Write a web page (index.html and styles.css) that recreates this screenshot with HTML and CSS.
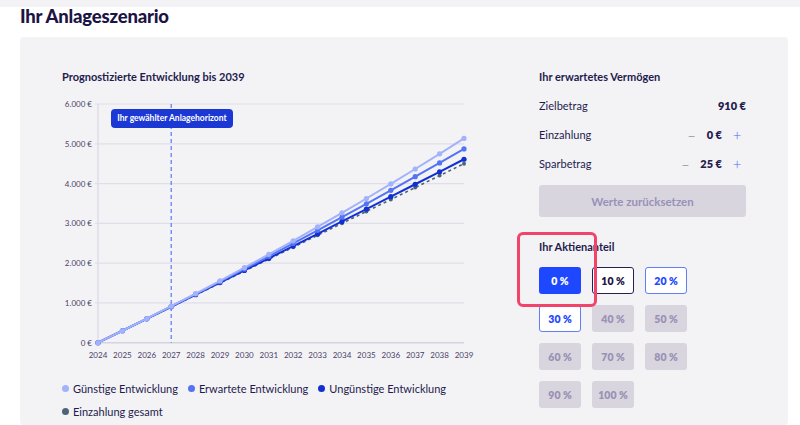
FILE: index.html
```html
<!DOCTYPE html>
<html lang="de">
<head>
  <meta charset="UTF-8" />
  <title>Ihr Anlageszenario</title>
  <link rel="stylesheet" href="styles.css">
</head>
<body>
  <div class="top-strip"></div>
  <h1 class="page-title">Ihr Anlageszenario</h1>

  <div class="panel">
    <!-- Chart column -->
    <section class="chart-col">
      <h2 class="section-title">Prognostizierte Entwicklung bis 2039</h2>
      <div class="chart-wrap">
        <svg id="chart" class="chart" width="420" height="270" viewBox="0 0 420 270"></svg>
        <div class="horizon-badge">Ihr gewählter Anlagehorizont</div>
      </div>
      <ul class="legend">
        <li><span class="dot dot-good"></span>Günstige Entwicklung</li>
        <li><span class="dot dot-expected"></span>Erwartete Entwicklung</li>
        <li><span class="dot dot-bad"></span>Ungünstige Entwicklung</li>
        <li><span class="dot dot-paid"></span>Einzahlung gesamt</li>
      </ul>
    </section>

    <!-- Settings column -->
    <section class="side-col">
      <h2 class="section-title">Ihr erwartetes Vermögen</h2>
      <div class="values">
        <div class="value-row">
          <span>Zielbetrag</span>
          <strong>910 €</strong>
        </div>
        <div class="value-row">
          <span>Einzahlung</span>
          <div class="stepper">
            <span class="minus">–</span>
            <strong>0 €</strong>
            <span class="plus">+</span>
          </div>
        </div>
        <div class="value-row">
          <span>Sparbetrag</span>
          <div class="stepper">
            <span class="minus">–</span>
            <strong>25 €</strong>
            <span class="plus">+</span>
          </div>
        </div>
      </div>
      <button class="reset-btn" disabled>Werte zurücksetzen</button>

      <div class="share">
        <h2 class="section-title">Ihr Aktienanteil</h2>
        <div class="share-grid">
          <button class="pct pct-active">0 %</button>
          <button class="pct pct-dark">10 %</button>
          <button class="pct pct-outline">20 %</button>
          <button class="pct pct-outline">30 %</button>
          <button class="pct" disabled>40 %</button>
          <button class="pct" disabled>50 %</button>
          <button class="pct" disabled>60 %</button>
          <button class="pct" disabled>70 %</button>
          <button class="pct" disabled>80 %</button>
          <button class="pct" disabled>90 %</button>
          <button class="pct" disabled>100 %</button>
        </div>
        <div class="highlight"></div>
      </div>
    </section>
  </div>

  <script>
    const svg = document.getElementById('chart');
    const NS = 'http://www.w3.org/2000/svg';
    const x0 = 36, dx = 24.4, y0 = 247.7, perK = 39.78;

    function el(tag, attrs, text) {
      const node = document.createElementNS(NS, tag);
      for (const k in attrs) node.setAttribute(k, attrs[k]);
      if (text) node.textContent = text;
      svg.appendChild(node);
      return node;
    }
    const xAt = k => x0 + k * dx;
    const yAt = v => y0 - v / 1000 * perK;

    // grid + y labels
    for (let i = 0; i <= 6; i++) {
      const y = yAt(i * 1000);
      el('line', { x1: 33, x2: 402, y1: y, y2: y, stroke: i === 0 ? '#d6d3df' : '#e0dee8', 'stroke-width': i === 0 ? 1.6 : 1.2 });
      el('text', { x: 30, y: y + 3, 'text-anchor': 'end', class: 'axis-label' }, i === 0 ? '0 €' : i + '.000 €');
    }
    el('line', { x1: x0, x2: x0, y1: yAt(6000), y2: y0, stroke: '#e0dee8', 'stroke-width': 1.6 });

    // x labels
    for (let k = 0; k <= 15; k++) {
      el('text', { x: xAt(k), y: 263, 'text-anchor': 'middle', class: 'axis-label' }, String(2024 + k));
    }

    // chosen horizon
    el('line', { x1: xAt(3), x2: xAt(3), y1: yAt(6000), y2: y0, stroke: '#5b78f2', 'stroke-width': 1.2, 'stroke-dasharray': '4 3' });

    const series = [
      { rate: 0, color: '#4e6476', dashed: true },
      { rate: 0.0035, color: '#1030d2' },
      { rate: 0.0112, color: '#5573f5' },
      { rate: 0.0186, color: '#a2b2fb' }
    ];

    for (const s of series) {
      let v = 0;
      const pts = [];
      for (let k = 0; k <= 15; k++) {
        if (k > 0) v = v * (1 + s.rate) + 300;
        pts.push([xAt(k), yAt(v)]);
      }
      el('polyline', {
        points: pts.map(p => p.join(',')).join(' '),
        fill: 'none', stroke: s.color,
        'stroke-width': s.dashed ? 1.6 : 2,
        'stroke-dasharray': s.dashed ? '3 3' : 'none'
      });
      for (const p of pts) {
        el('circle', { cx: p[0], cy: p[1], r: s.dashed ? 2 : 2.6, fill: s.color });
      }
    }
  </script>
</body>
</html>
```

FILE: styles.css
```css
html, body {
  margin: 0;
  padding: 0;
  overflow: hidden;
  background: #ffffff;
  font-family: 'Lato', 'Noto Sans', sans-serif;
  color: #1e1647;
}

.top-strip {
  height: 7px;
  background: #f3f3f6;
}

.page-title {
  margin: 0 0 0 20px;
  font-size: 18.5px;
  line-height: 18px;
  font-weight: 900;
  letter-spacing: -0.2px;
  color: #1c1444;
}

.panel {
  margin: 12px 12px 0 20px;
  padding: 33px 42px 0 42px;
  background: #f3f3f6;
  border-radius: 4px;
  display: grid;
  grid-template-columns: 1fr 207px;
  column-gap: 40px;
  height: 355px;
}

.section-title {
  margin: 0;
  font-size: 11px;
  line-height: 14px;
  font-weight: 700;
  color: #241b4d;
}

/* chart */
.chart-wrap {
  position: relative;
  margin-top: 11px;
  width: 420px;
  height: 270px;
}

.chart {
  display: block;
}

.axis-label {
  font-size: 8px;
  fill: #4a4266;
}

.horizon-badge {
  position: absolute;
  left: 49px;
  top: 14px;
  width: 122px;
  height: 19px;
  line-height: 19px;
  border-radius: 4px;
  background: #1b37d4;
  color: #fff;
  font-size: 8.5px;
  font-weight: 700;
  text-align: center;
}

.legend {
  list-style: none;
  margin: 12px 0 0 0;
  padding: 0;
  display: flex;
  flex-wrap: wrap;
  column-gap: 10px;
  font-size: 11px;
  line-height: 23px;
  color: #241b4d;
}

.legend li {
  display: flex;
  align-items: center;
  gap: 4px;
}

.dot {
  width: 7px;
  height: 7px;
  border-radius: 50%;
}

.dot-good { background: #a2b2fb; }
.dot-expected { background: #5573f5; }
.dot-bad { background: #1030d2; }
.dot-paid { background: #4e6476; }

/* side column */
.values {
  margin-top: 7px;
}

.value-row {
  height: 29px;
  display: flex;
  align-items: center;
  justify-content: space-between;
  font-size: 11px;
  color: #241b4d;
}

.value-row strong {
  font-weight: 800;
}

.stepper {
  display: flex;
  align-items: center;
  gap: 9px;
  margin-right: 3px;
}

.stepper .minus,
.stepper .plus {
  width: 12px;
  text-align: center;
  font-size: 15px;
  font-weight: 300;
}

.stepper .minus { color: #7a7294; }
.stepper .plus { color: #4b66f0; }

.reset-btn {
  display: block;
  width: 100%;
  height: 32px;
  margin-top: 7px;
  border: none;
  border-radius: 3px;
  background: #d8d5df;
  color: #9b90b8;
  font-family: inherit;
  font-size: 11.5px;
  font-weight: 700;
}

.share {
  position: relative;
  margin-top: 23px;
}

.share-grid {
  margin-top: 13px;
  display: grid;
  grid-template-columns: repeat(3, 42px);
  grid-auto-rows: 27px;
  gap: 11px;
}

.pct {
  border: 1px solid transparent;
  border-radius: 3px;
  background: #d8d5df;
  color: #9b91b5;
  font-family: inherit;
  font-size: 10.5px;
  font-weight: 800;
  padding: 0;
}

.pct-active {
  background: #1e48ff;
  color: #fff;
}

.pct-dark {
  background: #fff;
  border-color: #2a2050;
  color: #1c1444;
}

.pct-outline {
  background: #fff;
  border-color: #5f7ef7;
  color: #1e48ff;
}

.highlight {
  position: absolute;
  left: -22px;
  top: -8px;
  width: 74px;
  height: 69px;
  border: 3px solid #f2436b;
  border-radius: 6px;
}
```
